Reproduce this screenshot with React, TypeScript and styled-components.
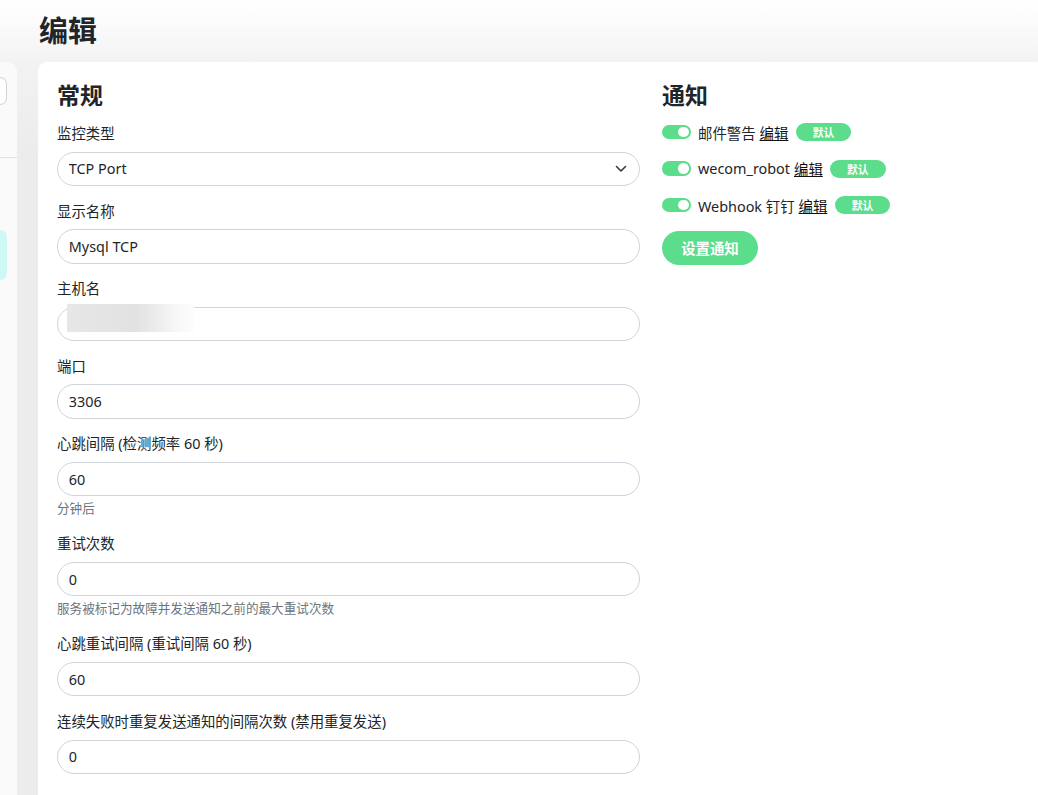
import styled, { createGlobalStyle } from 'styled-components';

const GlobalStyle = createGlobalStyle`
  html, body { margin: 0; padding: 0; }
  body {
    font-family: "Noto Sans", "Noto Sans CJK SC", sans-serif;
    font-size: 14.4px;
    color: #212529;
    background: #ececec;
    overflow: hidden;
  }
  * { box-sizing: border-box; }
`;

const Page = styled.div`
  display: flex;
  flex-direction: column;
  height: 100vh;
`;

const TopBar = styled.header`
  height: 62px;
  padding-left: 39px;
  background: linear-gradient(#ffffff 0%, #fafafa 45%, #f3f3f3 100%);
`;

const PageTitle = styled.h1`
  margin: 0;
  font-size: 29px;
  font-weight: 700;
  line-height: 62px;
  color: #212529;
`;

const Body = styled.div`
  flex: 1;
  display: flex;
  gap: 21px;
  background: linear-gradient(#f2f2f2 0px, #ececec 90px);
  min-height: 0;
`;

const Sidebar = styled.aside`
  width: 17px;
  background: #fafafa;
  border-top-right-radius: 9px;
  overflow: hidden;
`;

const SidebarHead = styled.div`
  height: 96px;
  padding-top: 15px;
  border-bottom: 1px solid #dee2e6;
`;

const SearchBox = styled.div`
  height: 28px;
  margin-right: 10px;
  border: 1px solid #ced4da;
  border-left: none;
  border-radius: 0 14px 14px 0;
  background: #fff;
`;

const SelectedItem = styled.div`
  height: 50px;
  margin: 72px 10px 0 0;
  border-radius: 0 10px 10px 0;
  background: #cdf8f4;
`;

const Card = styled.main`
  flex: 1;
  background: #fff;
  border-top-left-radius: 9px;
  padding: 19px 0 0 19px;
  display: grid;
  grid-template-columns: 583px 1fr;
  column-gap: 22px;
  align-items: start;
  overflow: hidden;
`;

const Column = styled.section``;

const SectionTitle = styled.h4`
  margin: 0 0 14px;
  font-size: 23px;
  font-weight: 700;
  line-height: 28px;
`;

const FormGroup = styled.div`
  margin-bottom: 14.6px;
`;

const Label = styled.label`
  display: block;
  font-size: 14.4px;
  line-height: 21.6px;
  margin-bottom: 7.2px;
`;

const Field = styled.div`
  position: relative;
`;

const Input = styled.input`
  display: block;
  width: 100%;
  height: 34.2px;
  border: 1px solid #ced4da;
  border-radius: 17.1px;
  padding: 0 10.8px;
  font: inherit;
  font-size: 14.4px;
  color: #212529;
  background: #fff;
  outline: none;
`;

const Select = styled.select`
  display: block;
  width: 100%;
  height: 34.2px;
  border: 1px solid #ced4da;
  border-radius: 17.1px;
  padding: 0 36px 0 10.8px;
  font: inherit;
  font-size: 14.4px;
  color: #212529;
  background: #fff;
  appearance: none;
  outline: none;
`;

const Chevron = styled.svg`
  position: absolute;
  right: 13px;
  top: 50%;
  transform: translateY(-50%);
  pointer-events: none;
`;

const Redaction = styled.div`
  position: absolute;
  left: 10px;
  top: -3px;
  width: 127px;
  height: 28px;
  background: linear-gradient(to right, #e7e7e7 0%, #e2e2e2 55%, #f6f6f6 85%, #fdfdfd 100%);
`;

const Hint = styled.div`
  margin-top: 3.6px;
  font-size: 12.6px;
  line-height: 18.9px;
  color: #6c757d;
`;

const NotifyList = styled.div`
  margin-top: -2px;
`;

const NotifyRow = styled.div`
  display: flex;
  align-items: center;
  height: 22px;
  margin-bottom: 14.5px;
  font-size: 14.4px;
`;

const Switch = styled.span`
  position: relative;
  width: 29px;
  height: 14.4px;
  border-radius: 7.2px;
  background: #5cdd8b;
  margin-right: 7px;
  flex-shrink: 0;

  &::after {
    content: '';
    position: absolute;
    right: 2px;
    top: 1.8px;
    width: 10.8px;
    height: 10.8px;
    border-radius: 50%;
    background: #fff;
  }
`;

const EditLink = styled.a`
  color: #111;
  text-decoration: underline;
  margin-left: 4px;
`;

const Badge = styled.span`
  display: inline-flex;
  align-items: center;
  justify-content: center;
  min-width: 55.8px;
  height: 18px;
  margin-left: 7.2px;
  border-radius: 9px;
  background: #5cdd8b;
  color: #fff;
  font-size: 10.8px;
  font-weight: 700;
`;

const PrimaryButton = styled.button`
  height: 34.2px;
  padding: 0 19.2px;
  border: none;
  border-radius: 17.1px;
  background: #5cdd8b;
  color: #fff;
  font: inherit;
  font-size: 14.4px;
  font-weight: 700;
`;

type FieldDef = { label: string; value: string; hint?: string; redacted?: boolean };

const fields: FieldDef[] = [
  { label: '显示名称', value: 'Mysql TCP' },
  { label: '主机名', value: '', redacted: true },
  { label: '端口', value: '3306' },
  { label: '心跳间隔 (检测频率 60 秒)', value: '60', hint: '分钟后' },
  { label: '重试次数', value: '0', hint: '服务被标记为故障并发送通知之前的最大重试次数' },
  { label: '心跳重试间隔 (重试间隔 60 秒)', value: '60' },
  { label: '连续失败时重复发送通知的间隔次数 (禁用重复发送)', value: '0' },
];

const notifications = ['邮件警告', 'wecom_robot', 'Webhook 钉钉'];

export default function App() {
  return (
    <Page>
      <GlobalStyle />
      <TopBar>
        <PageTitle>编辑</PageTitle>
      </TopBar>
      <Body>
        <Sidebar>
          <SidebarHead>
            <SearchBox />
          </SidebarHead>
          <SelectedItem />
        </Sidebar>
        <Card>
          <Column>
            <SectionTitle>常规</SectionTitle>
            <FormGroup>
              <Label>监控类型</Label>
              <Field>
                <Select defaultValue="port">
                  <option value="port">TCP Port</option>
                </Select>
                <Chevron width="12" height="8" viewBox="0 0 12 8">
                  <path d="M1.5 1.5 6 6l4.5-4.5" fill="none" stroke="#343a40" strokeWidth="1.6" strokeLinecap="round" strokeLinejoin="round" />
                </Chevron>
              </Field>
            </FormGroup>
            {fields.map((f) => (
              <FormGroup key={f.label}>
                <Label>{f.label}</Label>
                <Field>
                  <Input defaultValue={f.value} readOnly />
                  {f.redacted && <Redaction />}
                </Field>
                {f.hint && <Hint>{f.hint}</Hint>}
              </FormGroup>
            ))}
          </Column>
          <Column>
            <SectionTitle>通知</SectionTitle>
            <NotifyList>
              {notifications.map((n) => (
                <NotifyRow key={n}>
                  <Switch />
                  <span>{n}</span>
                  <EditLink href="#">编辑</EditLink>
                  <Badge>默认</Badge>
                </NotifyRow>
              ))}
              <PrimaryButton>设置通知</PrimaryButton>
            </NotifyList>
          </Column>
        </Card>
      </Body>
    </Page>
  );
}
